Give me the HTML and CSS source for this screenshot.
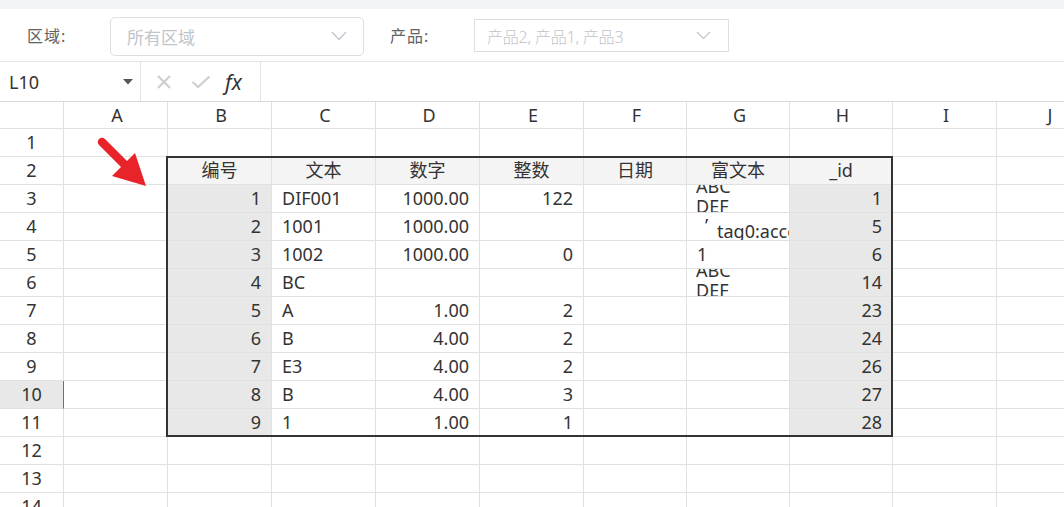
FILE: index.html
```html
<!DOCTYPE html>
<html lang="zh-CN">
<head>
<meta charset="UTF-8" />
<title>报表</title>
<link rel="stylesheet" href="styles.css">
</head>
<body>
  <div class="top-band"></div>

  <div class="filter-bar">
    <label class="filter-label label-area">区域:</label>
    <div class="select select-area">
      <span class="placeholder">所有区域</span>
      <svg class="chevron" width="16" height="10" viewBox="0 0 16 10"><path d="M1 1 L8 8.5 L15 1" fill="none" stroke="#c0c4cc" stroke-width="1.3"/></svg>
    </div>
    <label class="filter-label label-product">产品:</label>
    <div class="select select-product">
      <span class="placeholder light">产品2, 产品1, 产品3</span>
      <svg class="chevron" width="15" height="9" viewBox="0 0 15 9"><path d="M1 1 L7.5 7.5 L14 1" fill="none" stroke="#c0c4cc" stroke-width="1.2"/></svg>
    </div>
  </div>

  <div class="formula-bar">
    <div class="name-box">
      <span>L10</span>
      <svg width="10" height="6" viewBox="0 0 10 6"><path d="M0 0 L10 0 L5 5.5 Z" fill="#555"/></svg>
    </div>
    <div class="formula-icons">
      <svg width="16" height="16" viewBox="0 0 16 16"><path d="M2 2 L14 14 M14 2 L2 14" stroke="#cfcfcf" stroke-width="2.2"/></svg>
      <svg width="20" height="14" viewBox="0 0 20 14"><path d="M1.5 7 L7 12 L18.5 1.5" fill="none" stroke="#cfcfcf" stroke-width="2.2"/></svg>
      <span class="fx">fx</span>
    </div>
    <div class="formula-input"></div>
  </div>

  <div class="sheet-wrap">
    <div class="sheet" id="sheet"></div>
    <div class="range-box"></div>
    <svg class="arrow" width="70" height="70" viewBox="0 0 70 70">
      <path d="M9 8 L33 32" stroke="#e8232a" stroke-width="8.5" stroke-linecap="round"/>
      <path d="M53 52 L19 42 L42 19 Z" fill="#e8232a"/>
    </svg>
  </div>

<script>
  const cols = ["A", "B", "C", "D", "E", "F", "G", "H", "I", "J"];
  const sheet = document.getElementById("sheet");

  // table starting at B2
  const header = ["编号", "文本", "数字", "整数", "日期", "富文本", "_id"];
  const rows = [
    ["1", "DIF001", "1000.00", "122", "", "abc", "1"],
    ["2", "1001", "1000.00", "", "", "tag", "5"],
    ["3", "1002", "1000.00", "0", "", "1", "6"],
    ["4", "BC", "", "", "", "abc", "14"],
    ["5", "A", "1.00", "2", "", "", "23"],
    ["6", "B", "4.00", "2", "", "", "24"],
    ["7", "E3", "4.00", "2", "", "", "26"],
    ["8", "B", "4.00", "3", "", "", "27"],
    ["9", "1", "1.00", "1", "", "", "28"]
  ];
  const align = ["num", "text", "num", "num", "text", "text", "num"];

  function cell(cls, html) {
    const d = document.createElement("div");
    d.className = "cell " + cls;
    d.innerHTML = html;
    sheet.appendChild(d);
  }

  cell("corner", "");
  cols.forEach(c => cell("col-head", c));

  for (let r = 1; r <= 14; r++) {
    cell("row-head" + (r === 10 ? " active" : ""), r);
    cols.forEach((c, i) => {
      const t = i - 1;
      if (r === 2 && t >= 0 && t < 7) {
        cell("th", header[t]);
      } else if (r >= 3 && r <= 11 && t >= 0 && t < 7) {
        let v = rows[r - 3][t];
        let cls = align[t];
        if (t === 0 || t === 6) cls += " key";
        if (v === "abc") { v = '<div class="rich"><div>ABC</div><div>DEF</div></div>'; }
        if (v === "tag") { v = '<div class="rich tag"><div class="q">\u2019</div><div class="t">tag0:accessory</div></div>'; }
        cell(cls, v);
      } else {
        cell("", "");
      }
    });
  }
</script>
</body>
</html>
```

FILE: styles.css
```css
body {
  margin: 0;
  width: 1064px;
  height: 507px;
  overflow: hidden;
  background: #fff;
  font-family: "Noto Sans", "Noto Sans CJK SC", sans-serif;
  color: #333;
}
.top-band {
  height: 9px;
  background: #f3f4f6;
}
.filter-bar {
  height: 52px;
  border-bottom: 1px solid #e6e6e6;
  display: flex;
  align-items: center;
}
.filter-label {
  font-size: 16px;
  color: #606266;
  letter-spacing: 1px;
}
.label-area { margin-left: 27px; width: 83px; }
.label-product { margin-left: 26px; width: 84px; }
.select {
  box-sizing: border-box;
  display: flex;
  align-items: center;
  justify-content: space-between;
  border: 1px solid #dcdfe6;
}
.select-area {
  width: 254px;
  height: 39px;
  border-radius: 5px;
  padding: 0 16px 0 16px;
  margin-top: 2px;
}
.select-product {
  width: 255px;
  height: 33px;
  padding: 0 17px 0 12px;
  margin-top: 1px;
}
.placeholder {
  font-size: 17px;
  color: #c0c4cc;
}
.placeholder.light {
  font-size: 16px;
  font-weight: 300;
  letter-spacing: -0.2px;
}
.formula-bar {
  height: 39px;
  border-bottom: 1px solid #d9d9d9;
  display: flex;
}
.name-box {
  box-sizing: border-box;
  width: 141px;
  border-right: 1px solid #e3e3e3;
  display: flex;
  align-items: center;
  justify-content: space-between;
  padding: 0 7px 0 9px;
  font-size: 18px;
  color: #333;
}
.formula-icons {
  box-sizing: border-box;
  width: 120px;
  border-right: 1px solid #e3e3e3;
  display: flex;
  align-items: center;
  padding-left: 15px;
  gap: 22px;
}
.formula-icons svg + svg { margin-left: -3px; }
.fx {
  font-size: 21px;
  font-style: italic;
  color: #333;
  margin-left: -8px;
}
.formula-input { flex: 1; }

.sheet-wrap {
  position: relative;
}
.sheet {
  display: grid;
  grid-template-columns: 64px 104px 104px 104px 104px 104px 103px 103px 103px 104px 104px;
  grid-template-rows: 27px repeat(14, 28px);
}
.cell {
  box-sizing: border-box;
  border-right: 1px solid #e1e1e1;
  border-bottom: 1px solid #e1e1e1;
  font-size: 18px;
  line-height: 27px;
  white-space: nowrap;
  overflow: hidden;
  padding: 0 10px;
}
.col-head, .row-head, .th {
  text-align: center;
  padding: 0;
}
.col-head { padding-left: 3px; }
.row-head.active {
  background: #e8e8e8;
  border-right: 1px solid #5a64e8;
}
.th {
  background: #f4f4f4;
}
.num { text-align: right; }
.key { background: #e8e8e8; }
.rich {
  height: 27px;
  display: flex;
  flex-direction: column;
  justify-content: center;
  line-height: 20px;
  margin-left: -1px;
  margin-top: -3px;
}
.rich.tag {
  justify-content: flex-start;
  line-height: 18px;
  margin-top: 0;
  padding-top: 4px;
}
.rich.tag .q { padding-left: 9px; line-height: 16px; }
.rich.tag .t { padding-left: 21px; margin-top: -11px; }
.range-box {
  position: absolute;
  left: 166px;
  top: 54px;
  width: 727px;
  height: 281px;
  box-sizing: border-box;
  border: 2px solid #333;
  pointer-events: none;
}
.arrow {
  position: absolute;
  left: 93px;
  top: 32px;
}
```
